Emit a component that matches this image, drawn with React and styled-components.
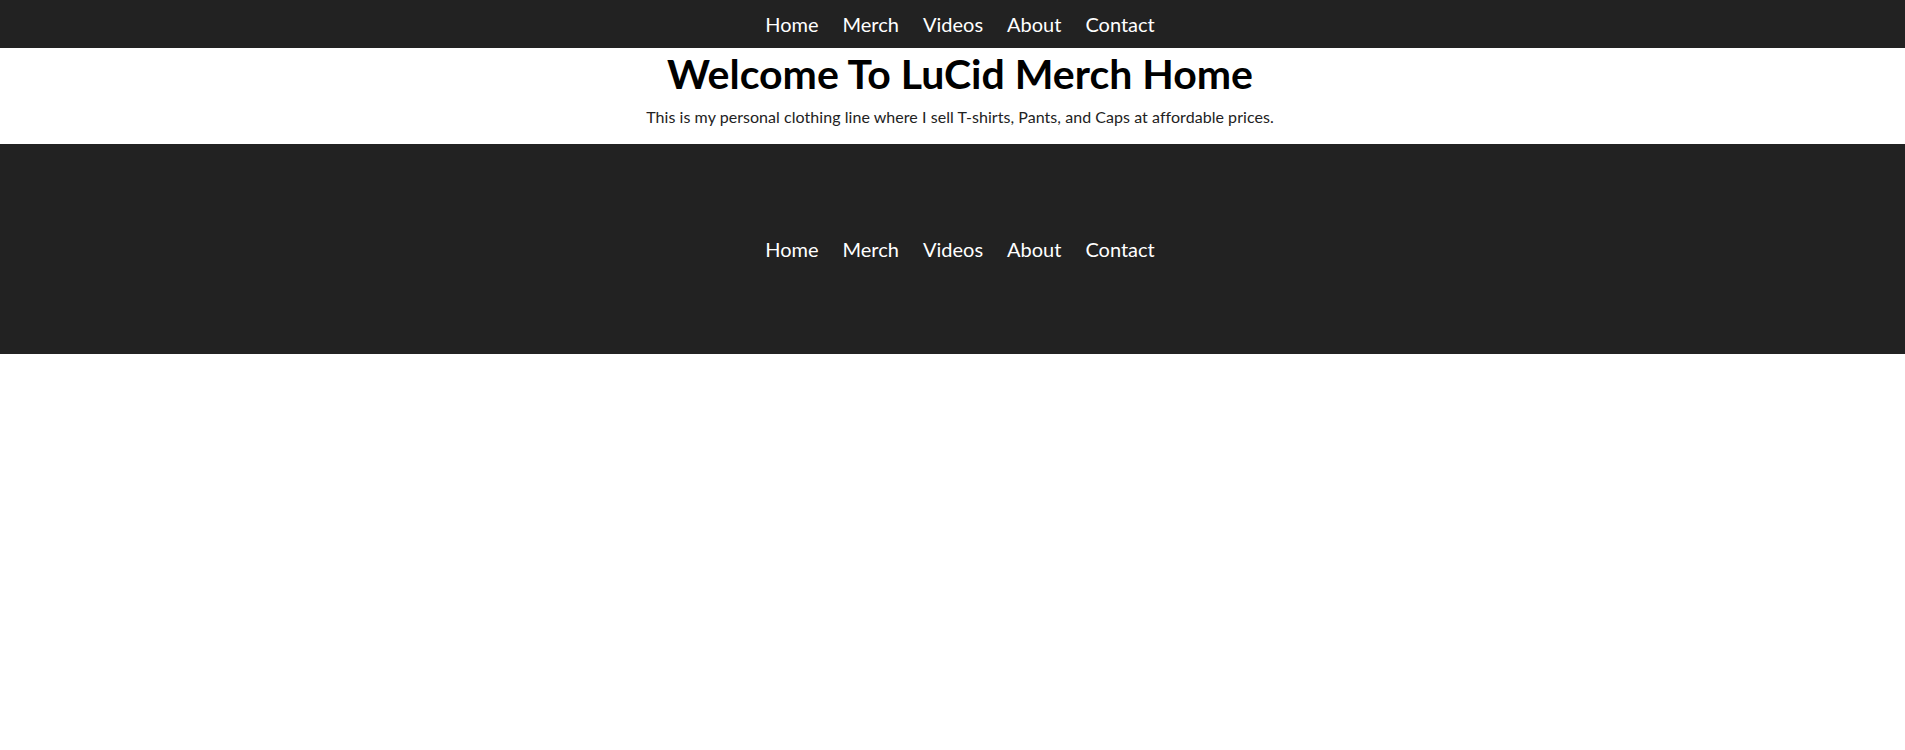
import React from 'react'
import styled, { createGlobalStyle } from 'styled-components'

const GlobalStyle = createGlobalStyle`
  html, body {
    overflow-x: hidden;
  }
  body {
    margin: 0;
    font-family: Lato, "Open Sans", sans-serif;
    background: #fff;
  }
  #root {
    width: 1920px;
  }
`

const links = ['Home', 'Merch', 'Videos', 'About', 'Contact']

const NavBar = styled.nav`
  display: flex;
  justify-content: center;
  align-items: center;
  height: 48px;
  background: #222222;
`

const NavList = styled.ul`
  display: flex;
  gap: 24px;
  list-style: none;
  margin: 0;
  padding: 0;
`

const NavLink = styled.a`
  color: #ffffff;
  text-decoration: none;
  font-size: 20px;
`

const Header = styled.header`
  display: flex;
  flex-direction: column;
  align-items: center;
  height: 96px;
`

const Title = styled.h1`
  font-size: 41px;
  font-weight: 700;
  margin: 1px 0 0;
  color: #000;
`

const Desc = styled.p`
  font-size: 16px;
  letter-spacing: 0.05px;
  margin: 9px 0 0;
  color: #222;
`

const Footer = styled.footer`
  display: flex;
  justify-content: center;
  align-items: center;
  height: 210px;
  background: #222222;
`

const Nav = () => (
  <NavList>
    {links.map((l) => (
      <li key={l}>
        <NavLink href="#">{l}</NavLink>
      </li>
    ))}
  </NavList>
)

const App = () => {
  return (
    <>
      <GlobalStyle />
      <NavBar>
        <Nav />
      </NavBar>
      <Header>
        <Title>Welcome To LuCid Merch Home</Title>
        <Desc>This is my personal clothing line where I sell T-shirts, Pants, and Caps at affordable prices.</Desc>
      </Header>
      <Footer>
        <Nav />
      </Footer>
    </>
  )
}

export default App
